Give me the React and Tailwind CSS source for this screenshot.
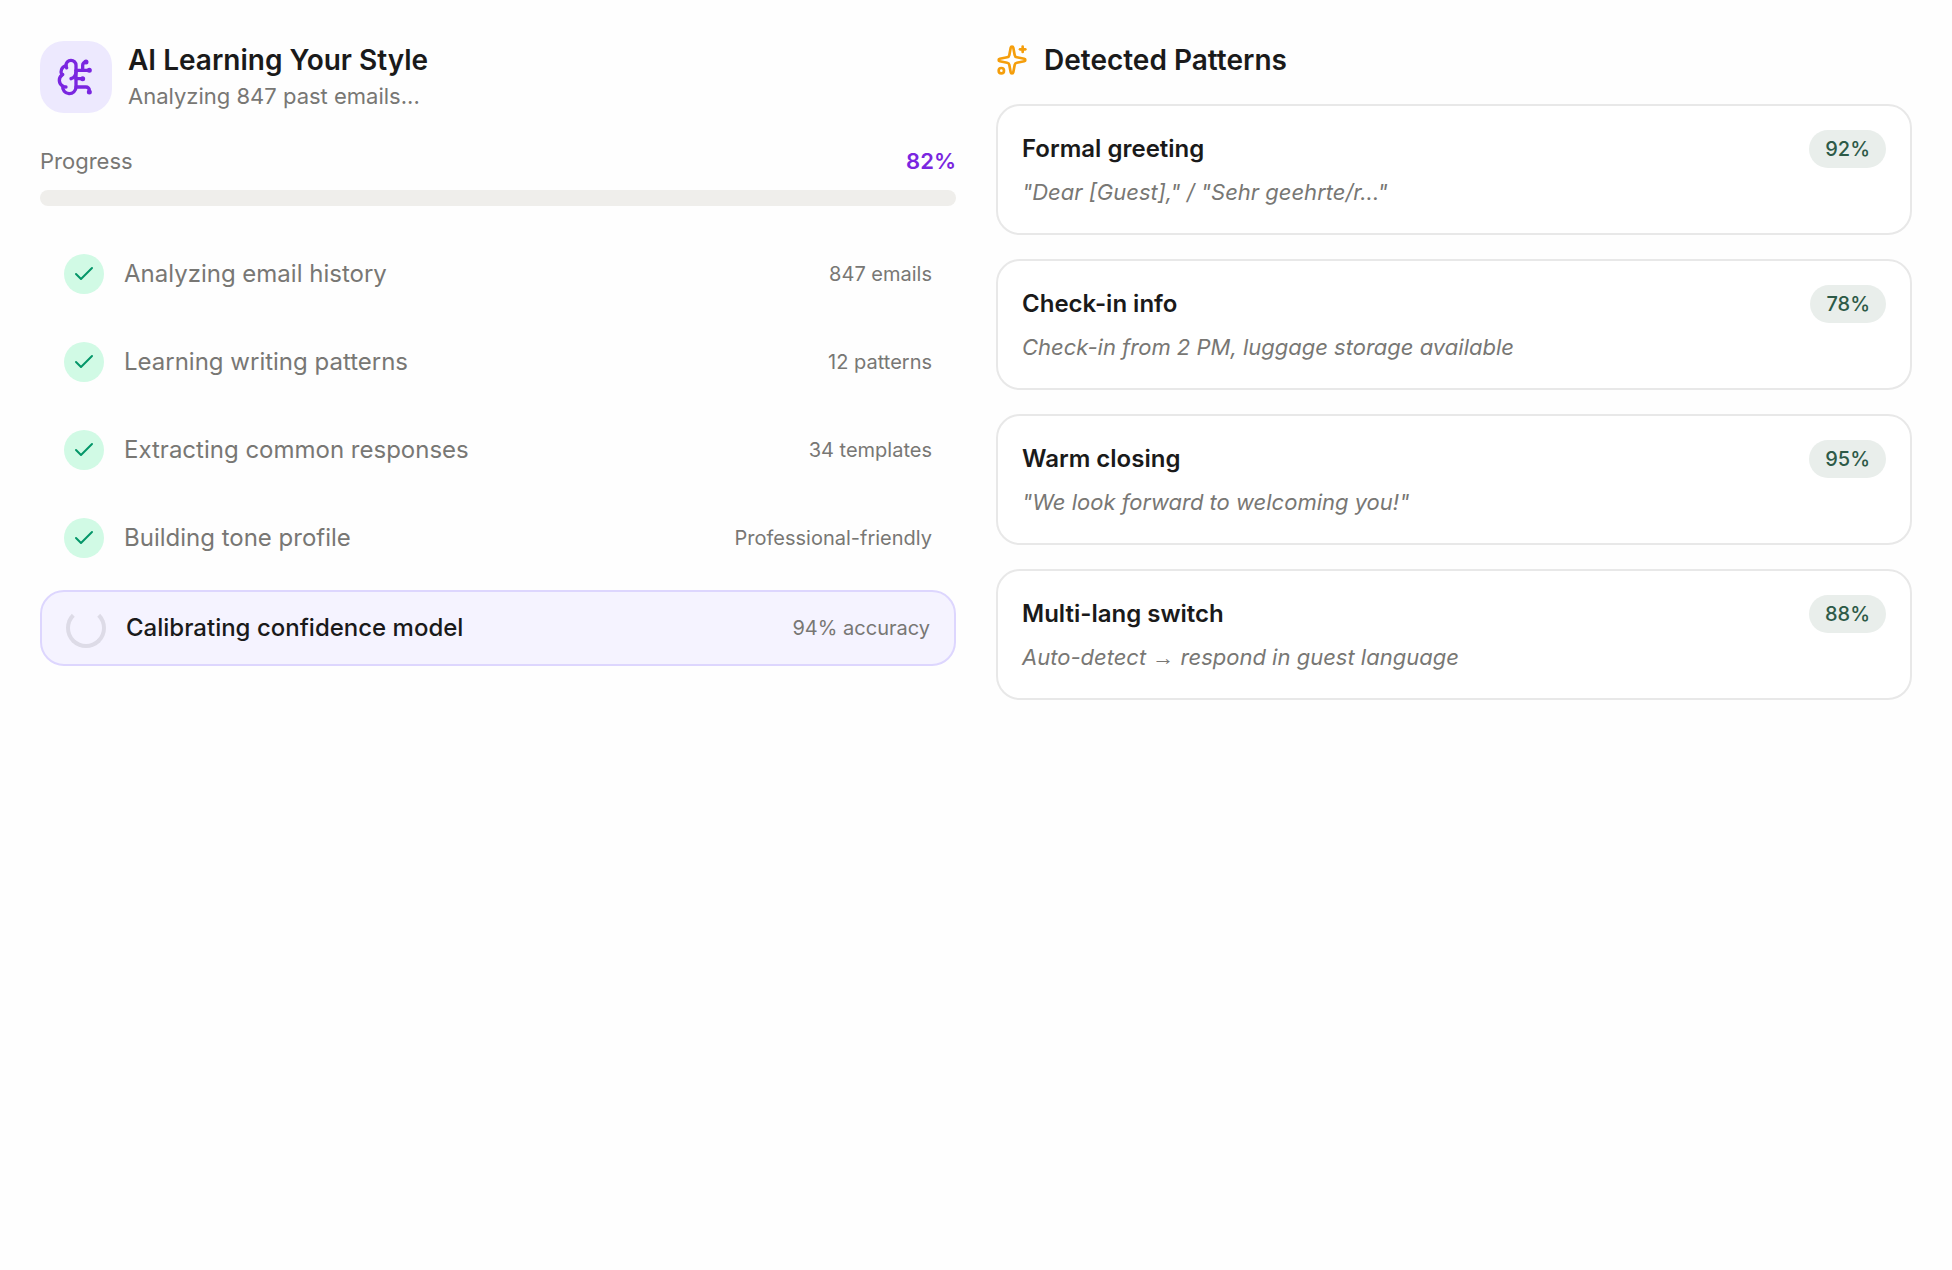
import { BrainCircuit, Check, Sparkles } from "lucide-react";

const PROGRESS = 82;

const STEPS = [
  { label: "Analyzing email history", value: "847 emails", done: true },
  { label: "Learning writing patterns", value: "12 patterns", done: true },
  { label: "Extracting common responses", value: "34 templates", done: true },
  { label: "Building tone profile", value: "Professional-friendly", done: true },
  { label: "Calibrating confidence model", value: "94% accuracy", done: false },
];

const PATTERNS = [
  { name: "Formal greeting", example: '"Dear [Guest]," / "Sehr geehrte/r..."', score: 92 },
  { name: "Check-in info", example: "Check-in from 2 PM, luggage storage available", score: 78 },
  { name: "Warm closing", example: '"We look forward to welcoming you!"', score: 95 },
  {
    name: "Multi-lang switch",
    example: (
      <>
        Auto-detect <span className="font-['Liberation_Sans',sans-serif]">→</span> respond in guest language
      </>
    ),
    score: 88,
  },
];

function StepRow({ step }) {
  if (step.done) {
    return (
      <li className="flex items-center gap-5 rounded-3xl px-6 py-4">
        <span className="flex size-10 shrink-0 items-center justify-center rounded-full bg-[#d1fae5]">
          <Check size={24} className="text-[#059669]" />
        </span>
        <span className="flex-1 text-2xl text-[#787774]">{step.label}</span>
        <span className="text-xl text-[#787774]">{step.value}</span>
      </li>
    );
  }

  return (
    <li className="flex items-center gap-5 rounded-3xl border-2 border-[#ddd6fe] bg-[#f5f3ff] px-6 py-4">
      <span className="size-10 shrink-0 rounded-full border-4 border-[#dddbe7] border-t-transparent" />
      <span className="flex-1 text-2xl font-medium text-[#1a1a1a]">{step.label}</span>
      <span className="text-xl text-[#787774]">{step.value}</span>
    </li>
  );
}

function PatternCard({ pattern }) {
  return (
    <li className="rounded-3xl border-2 border-[#e8e8e8] bg-white p-6">
      <div className="mb-2 flex items-center justify-between">
        <h3 className="text-2xl font-semibold text-[#1a1a1a]">{pattern.name}</h3>
        <span className="rounded-full bg-[#e9eeeb] px-4 py-1 text-[20px] leading-[30px] font-medium text-[#2d5a47]">
          {pattern.score}%
        </span>
      </div>
      <p className="text-[22px] leading-[33px] text-[#787774] italic">{pattern.example}</p>
    </li>
  );
}

export default function App() {
  return (
    <main className="grid min-h-screen grid-cols-2 content-start gap-10 bg-[#fefefe] p-10 font-['Inter',sans-serif]">
      <section>
        <header className="mb-8 flex items-center gap-4">
          <div className="flex size-[72px] items-center justify-center rounded-3xl bg-[#ede9fe]">
            <BrainCircuit size={40} className="text-[#7a26e0]" />
          </div>
          <div>
            <h2 className="text-[28px] leading-[40px] font-semibold text-[#1a1a1a]">AI Learning Your Style</h2>
            <p className="text-[22px] leading-[33px] text-[#787774]">Analyzing 847 past emails...</p>
          </div>
        </header>

        {/* Progress */}
        <div className="mb-3 flex justify-between text-[22px] leading-[33px]">
          <span className="text-[#787774]">Progress</span>
          <span className="font-semibold text-[#7a26e0]">{PROGRESS}%</span>
        </div>
        <div className="mb-8 h-4 rounded-full bg-[#efeeeb]" />

        {/* Steps */}
        <ul className="space-y-4">
          {STEPS.map((step) => (
            <StepRow key={step.label} step={step} />
          ))}
        </ul>
      </section>

      <section>
        <header className="mb-6 flex items-center gap-4">
          <Sparkles size={32} className="text-[#f59e0b]" />
          <h2 className="text-[28px] leading-[40px] font-semibold text-[#1a1a1a]">Detected Patterns</h2>
        </header>
        <ul className="space-y-6">
          {PATTERNS.map((pattern) => (
            <PatternCard key={pattern.name} pattern={pattern} />
          ))}
        </ul>
      </section>
    </main>
  );
}
